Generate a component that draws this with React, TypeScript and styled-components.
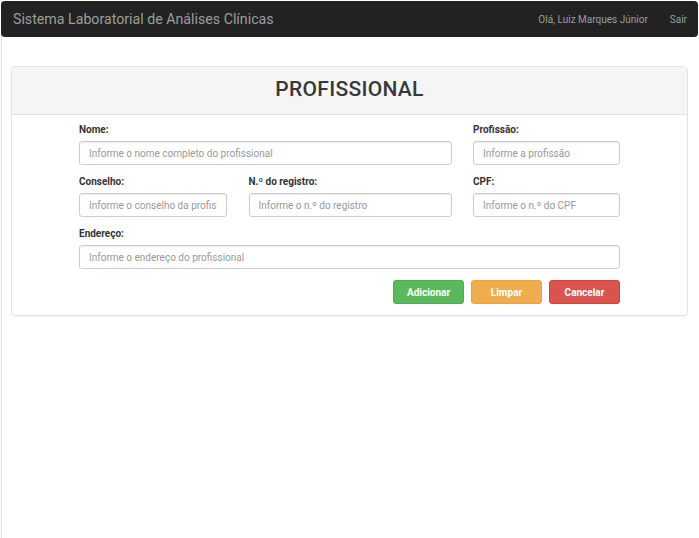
import React from "react";
import styled, { createGlobalStyle } from "styled-components";

const Global = createGlobalStyle`
  html, body { margin: 0; padding: 0; background: #fff; }
  body { font-family: Roboto, "Liberation Sans", Arial, sans-serif; color: #333; }
  * { box-sizing: border-box; }
`;

const Page = styled.div`
  margin-left: 1px;
  border-left: 1px solid #e2e2e2;
  min-height: 538px;
  display: flex;
  flex-direction: column;
`;

const NavBar = styled.header`
  margin: 1px 1px 0 -1px;
  height: 36px;
  background: #222;
  border-radius: 4px;
  display: flex;
  align-items: center;
  justify-content: space-between;
  padding: 0 11px 0 12px;
`;

const Brand = styled.div`
  color: #9d9d9d;
  font-size: 14.2px;
`;

const NavRight = styled.div`
  display: flex;
  gap: 22px;
  color: #9d9d9d;
  font-size: 10px;
`;

const Panel = styled.section`
  margin: 29px 11px 0 9px;
  border: 1px solid #e3e3e3;
  border-radius: 4px;
  box-shadow: 0 1px 1px rgba(0, 0, 0, 0.05);
  overflow: hidden;
`;

const PanelHeading = styled.div`
  height: 48px;
  padding-bottom: 3px;
  background: #f5f5f5;
  border-bottom: 1px solid #e3e3e3;
  display: flex;
  align-items: center;
  justify-content: center;
`;

const Title = styled.h1`
  margin: 0;
  font-size: 21px;
  font-weight: 500;
  color: #383838;
  letter-spacing: 0.3px;
`;

const PanelBody = styled.div`
  padding: 9px 0 11px;
  display: flex;
  justify-content: center;
`;

const FormGrid = styled.div`
  width: 541px;
  display: grid;
  grid-template-columns: 148px 203px 147px;
  column-gap: 21.5px;
  row-gap: 11px;
`;

const Field = styled.div<{ $span?: number }>`
  grid-column: span ${(p) => p.$span ?? 1};
  display: flex;
  flex-direction: column;
  gap: 5px;
`;

const Label = styled.label`
  font-size: 10px;
  font-weight: 700;
  color: #333;
  line-height: 12px;
`;

const Input = styled.input`
  height: 24px;
  width: 100%;
  border: 1px solid #ccc;
  border-radius: 3px;
  padding: 0 9px;
  font-family: Roboto, "Liberation Sans", Arial, sans-serif;
  font-size: 10px;
  color: #555;
  box-shadow: inset 0 1px 1px rgba(0, 0, 0, 0.075);
  &::placeholder { color: #999; }
`;

const Actions = styled.div`
  grid-column: 1 / -1;
  display: flex;
  justify-content: flex-end;
  gap: 7px;
`;

const Button = styled.button<{ $bg: string; $border: string }>`
  width: 71px;
  height: 24px;
  border: 1px solid ${(p) => p.$border};
  background: ${(p) => p.$bg};
  color: #fff;
  border-radius: 3px;
  font-family: Roboto, "Liberation Sans", Arial, sans-serif;
  font-size: 10px;
  font-weight: 700;
  padding: 0;
`;

export default function App() {
  return (
    <>
      <Global />
      <Page>
        <NavBar>
          <Brand>Sistema Laboratorial de Análises Clínicas</Brand>
          <NavRight>
            <span>Olá, Luiz Marques Júnior</span>
            <span>Sair</span>
          </NavRight>
        </NavBar>
        <Panel>
          <PanelHeading>
            <Title>PROFISSIONAL</Title>
          </PanelHeading>
          <PanelBody>
            <FormGrid>
              <Field $span={2}>
                <Label>Nome:</Label>
                <Input placeholder="Informe o nome completo do profissional" />
              </Field>
              <Field>
                <Label>Profissão:</Label>
                <Input placeholder="Informe a profissão" />
              </Field>
              <Field>
                <Label>Conselho:</Label>
                <Input placeholder="Informe o conselho da profissão" />
              </Field>
              <Field>
                <Label>N.º do registro:</Label>
                <Input placeholder="Informe o n.º do registro" />
              </Field>
              <Field>
                <Label>CPF:</Label>
                <Input placeholder="Informe o n.º do CPF" />
              </Field>
              <Field $span={3}>
                <Label>Endereço:</Label>
                <Input placeholder="Informe o endereço do profissional" />
              </Field>
              <Actions>
                <Button $bg="#5cb85c" $border="#4cae4c">Adicionar</Button>
                <Button $bg="#f0ad4e" $border="#eea236">Limpar</Button>
                <Button $bg="#d9534f" $border="#d43f3a">Cancelar</Button>
              </Actions>
            </FormGrid>
          </PanelBody>
        </Panel>
      </Page>
    </>
  );
}
